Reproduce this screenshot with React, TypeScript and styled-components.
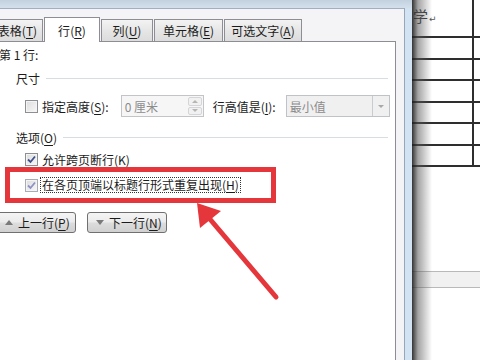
import React, { FC } from 'react';
import styled, { createGlobalStyle, css } from 'styled-components';

const GlobalStyle = createGlobalStyle`
    html, body {
        margin: 0;
        padding: 0;
        background: #ffffff;
    }
    body {
        font-family: "Noto Sans CJK SC", "Noto Sans", sans-serif;
        font-size: 12px;
        color: #1b1b1b;
    }
`;

const Screen = styled.div`
    position: relative;
    display: flex;
    width: 480px;
    height: 360px;
    overflow: hidden;
    background: #ffffff;
`;

const DialogFrame = styled.div`
    display: flex;
    flex-direction: column;
    flex: none;
    width: 426px;
    margin-left: -14px;
    padding: 8px 7px 0 0;
    box-sizing: border-box;
    background: linear-gradient(to bottom, #c3d1df 0px, #d3e0ec 8px, #d2e4f4 9px);
`;

const Client = styled.div`
    display: flex;
    flex-direction: column;
    flex: 1;
    padding: 0 8px 0 6px;
    border-top: 1px solid #9fb0c2;
    border-right: 1px solid #9aa6b3;
    background: #f4f3f5;
`;

const TabStrip = styled.div`
    display: flex;
    align-items: flex-end;
    gap: 1px;
    height: 32px;
    position: relative;
    z-index: 1;
`;

const Tab = styled.div<{ $width: number; $active?: boolean }>`
    display: flex;
    align-items: center;
    justify-content: center;
    box-sizing: border-box;
    width: ${p => p.$width}px;
    height: 22px;
    border: 1px solid #8c8e94;
    border-bottom: none;
    background: linear-gradient(to bottom, #f3f3f3, #e6e6e6 50%, #dcdcdc);
    white-space: nowrap;
    ${p => p.$active && css`
        height: 25px;
        margin-bottom: -1px;
        background: #ffffff;
    `}
`;

const Key = styled.span`
    text-decoration: underline;
    text-underline-offset: 2px;
`;

const Panel = styled.div`
    flex: 1;
    display: flex;
    flex-direction: column;
    padding: 5px 0 0 6px;
    border: 1px solid #8c8e94;
    border-bottom: none;
    background: #ffffff;
`;

const Line = styled.div`
    height: 16px;
    line-height: 16px;
    white-space: nowrap;
`;

const GroupHead = styled.div<{ $top: number }>`
    display: flex;
    align-items: center;
    height: 16px;
    margin-top: ${p => p.$top}px;
    padding-left: 17px;
    white-space: nowrap;

    &::after {
        content: "";
        flex: 1;
        height: 1px;
        margin: 1px 7px 0 6px;
        background: #d8dde2;
    }
`;

const SizeRow = styled.div`
    display: flex;
    align-items: center;
    height: 22px;
    margin-top: 9px;
    padding-left: 26px;
    white-space: nowrap;
`;

const CheckRow = styled.div<{ $top: number }>`
    display: flex;
    align-items: center;
    height: 16px;
    margin-top: ${p => p.$top}px;
    padding-left: 26px;
    white-space: nowrap;
`;

const Box = styled.div<{ $faded?: boolean }>`
    display: flex;
    align-items: center;
    justify-content: center;
    flex: none;
    box-sizing: border-box;
    width: 13px;
    height: 13px;
    margin-right: 4px;
    border: 1px solid ${p => (p.$faded ? '#a9abb5' : '#8e8f94')};
    background: linear-gradient(135deg, #dcdcdc, #f8f8f8);
    box-shadow: inset 0 0 0 1px #f4f4f4;
`;

const Label = styled.span<{ $focus?: boolean; $before?: number; $after?: number }>`
    margin-left: ${p => p.$before ?? 0}px;
    margin-right: ${p => p.$after ?? 0}px;
    ${p => p.$focus && css`
        margin-left: -2px;
        padding: 0 1px;
        line-height: 14px;
        border: 1px dotted #333;
    `}
`;

const Spinner = styled.div`
    display: flex;
    align-items: center;
    box-sizing: border-box;
    width: 83px;
    height: 22px;
    padding-left: 3px;
    border: 1px solid #c2c4c8;
    background: #f6f6f6;
    color: #8c8c8c;
`;

const SpinValue = styled.span`
    flex: 1;
`;

const SpinButtons = styled.div`
    display: flex;
    flex-direction: column;
    gap: 1px;
    width: 14px;
    height: 18px;
    margin-right: 1px;
`;

const SpinButton = styled.div<{ $down?: boolean }>`
    flex: 1;
    display: flex;
    align-items: center;
    justify-content: center;
    border: 1px solid #d4d5d8;
    border-radius: 2px;
    background: #f1f1f1;

    &::before {
        content: "";
        border-left: 3px solid transparent;
        border-right: 3px solid transparent;
        ${p => p.$down
            ? css`border-top: 3px solid #b5b5b5;`
            : css`border-bottom: 3px solid #b5b5b5;`}
    }
`;

const Select = styled.div`
    display: flex;
    align-items: center;
    box-sizing: border-box;
    width: 104px;
    height: 22px;
    padding-left: 3px;
    border: 1px solid #bfc2c6;
    background: #f0f0f0;
    color: #8c8c8c;
`;

const SelectValue = styled.span`
    flex: 1;
`;

const DropButton = styled.div`
    display: flex;
    align-items: center;
    justify-content: center;
    width: 16px;
    height: 20px;
    border-left: 1px solid #c9cbce;

    &::before {
        content: "";
        border-left: 3px solid transparent;
        border-right: 3px solid transparent;
        border-top: 3px solid #a8a8a8;
    }
`;

const ButtonRow = styled.div`
    display: flex;
    gap: 11px;
    margin: 19px 0 0 -3px;
`;

const NavButton = styled.div<{ $down?: boolean }>`
    display: flex;
    align-items: center;
    gap: 5px;
    box-sizing: border-box;
    width: 80px;
    height: 21px;
    padding-left: 8px;
    border: 1px solid #707070;
    border-radius: 3px;
    background: linear-gradient(to bottom, #f4f4f4, #ebebeb 48%, #dddddd 52%, #d0d0d0);
    white-space: nowrap;

    &::before {
        content: "";
        border-left: 4px solid transparent;
        border-right: 4px solid transparent;
        ${p => p.$down
            ? css`border-top: 5px solid #7a7a7a;`
            : css`border-bottom: 5px solid #7a7a7a;`}
    }
`;

const DocArea = styled.div`
    position: relative;
    flex: 1;
    display: flex;
    flex-direction: column;
    background: #ffffff;
`;

const TableRow = styled.div<{ $height: number }>`
    display: grid;
    grid-template-columns: 62px 1fr;
    height: ${p => p.$height}px;
    border-bottom: 2px solid #2e2e2e;
    box-sizing: border-box;
`;

const Cell = styled.div`
    border-right: 2px solid #2e2e2e;
    padding: 7px 0 0 1px;
    font-size: 15px;
    line-height: 18px;
    color: #3a3a3a;
    white-space: nowrap;
`;

const ReturnMark = styled.span`
    font-family: "DejaVu Sans", sans-serif;
    font-size: 9px;
    color: #555;
    margin-left: 1px;
`;

const PageGap = styled.div`
    height: 15px;
    margin-top: 104px;
    border-top: 1px solid #b9b9b9;
    border-bottom: 1px solid #b9b9b9;
    background: #f1f1f1;
`;

const WindowShadow = styled.div`
    position: absolute;
    top: 0;
    bottom: 0;
    left: 0;
    width: 20px;
    background: linear-gradient(to right, rgba(30, 30, 30, 0.9), rgba(90, 90, 90, 0.55) 30%, rgba(255, 255, 255, 0));
`;

const Highlight = styled.div`
    position: absolute;
    left: 5px;
    top: 167px;
    width: 271px;
    height: 36px;
    box-sizing: border-box;
    border: 5px solid #e5363b;
    pointer-events: none;
`;

const Overlay = styled.svg`
    position: absolute;
    inset: 0;
    pointer-events: none;
`;

const CheckMark: FC<{ faded?: boolean }> = ({ faded }) => (
    <svg width="9" height="9" viewBox="0 0 9 9">
        <path d="M1 4.5 L3.5 7 L8 1.5" fill="none" stroke={faded ? '#8e90c6' : '#3f4f8c'} strokeWidth="1.8" />
    </svg>
);

const TABS = [
    { label: '表格', key: 'T', width: 51 },
    { label: '行', key: 'R', width: 56, active: true },
    { label: '列', key: 'U', width: 52 },
    { label: '单元格', key: 'E', width: 69 },
    { label: '可选文字', key: 'A', width: 78 },
];

const ROWS = [38, 22, 21, 22, 21, 22, 21];

const App: FC = () => {
    return (
        <Screen>
            <GlobalStyle />
            <DialogFrame>
                <Client>
                    <TabStrip>
                        {TABS.map(tab => (
                            <Tab key={tab.key} $width={tab.width} $active={tab.active}>
                                <span>{tab.label}(<Key>{tab.key}</Key>)</span>
                            </Tab>
                        ))}
                    </TabStrip>
                    <Panel>
                        <Line>第 1 行:</Line>
                        <GroupHead $top={7}>尺寸</GroupHead>
                        <SizeRow>
                            <Box />
                            <Label $after={12}>指定高度(<Key>S</Key>):</Label>
                            <Spinner>
                                <SpinValue>0 厘米</SpinValue>
                                <SpinButtons>
                                    <SpinButton />
                                    <SpinButton $down />
                                </SpinButtons>
                            </Spinner>
                            <Label $before={9} $after={10}>行高值是(<Key>I</Key>):</Label>
                            <Select>
                                <SelectValue>最小值</SelectValue>
                                <DropButton />
                            </Select>
                        </SizeRow>
                        <GroupHead $top={12}><span>选项(<Key>O</Key>)</span></GroupHead>
                        <CheckRow $top={6}>
                            <Box><CheckMark /></Box>
                            <Label>允许跨页断行(<Key>K</Key>)</Label>
                        </CheckRow>
                        <CheckRow $top={10}>
                            <Box $faded><CheckMark faded /></Box>
                            <Label $focus>在各页顶端以标题行形式重复出现(<Key>H</Key>)</Label>
                        </CheckRow>
                        <ButtonRow>
                            <NavButton><span>上一行(<Key>P</Key>)</span></NavButton>
                            <NavButton $down><span>下一行(<Key>N</Key>)</span></NavButton>
                        </ButtonRow>
                    </Panel>
                </Client>
            </DialogFrame>
            <DocArea>
                {ROWS.map((h, i) => (
                    <TableRow key={i} $height={h}>
                        <Cell>{i === 0 && <>学<ReturnMark>↵</ReturnMark></>}</Cell>
                        <div />
                    </TableRow>
                ))}
                <PageGap />
                <WindowShadow />
            </DocArea>
            <Highlight />
            <Overlay width="480" height="360" viewBox="0 0 480 360">
                <line x1="276" y1="297" x2="209" y2="218" stroke="#e5363b" strokeWidth="5" strokeLinecap="round" />
                <polygon points="197,203 221,211 200,228" fill="#e5363b" />
            </Overlay>
        </Screen>
    );
};

export default App;
